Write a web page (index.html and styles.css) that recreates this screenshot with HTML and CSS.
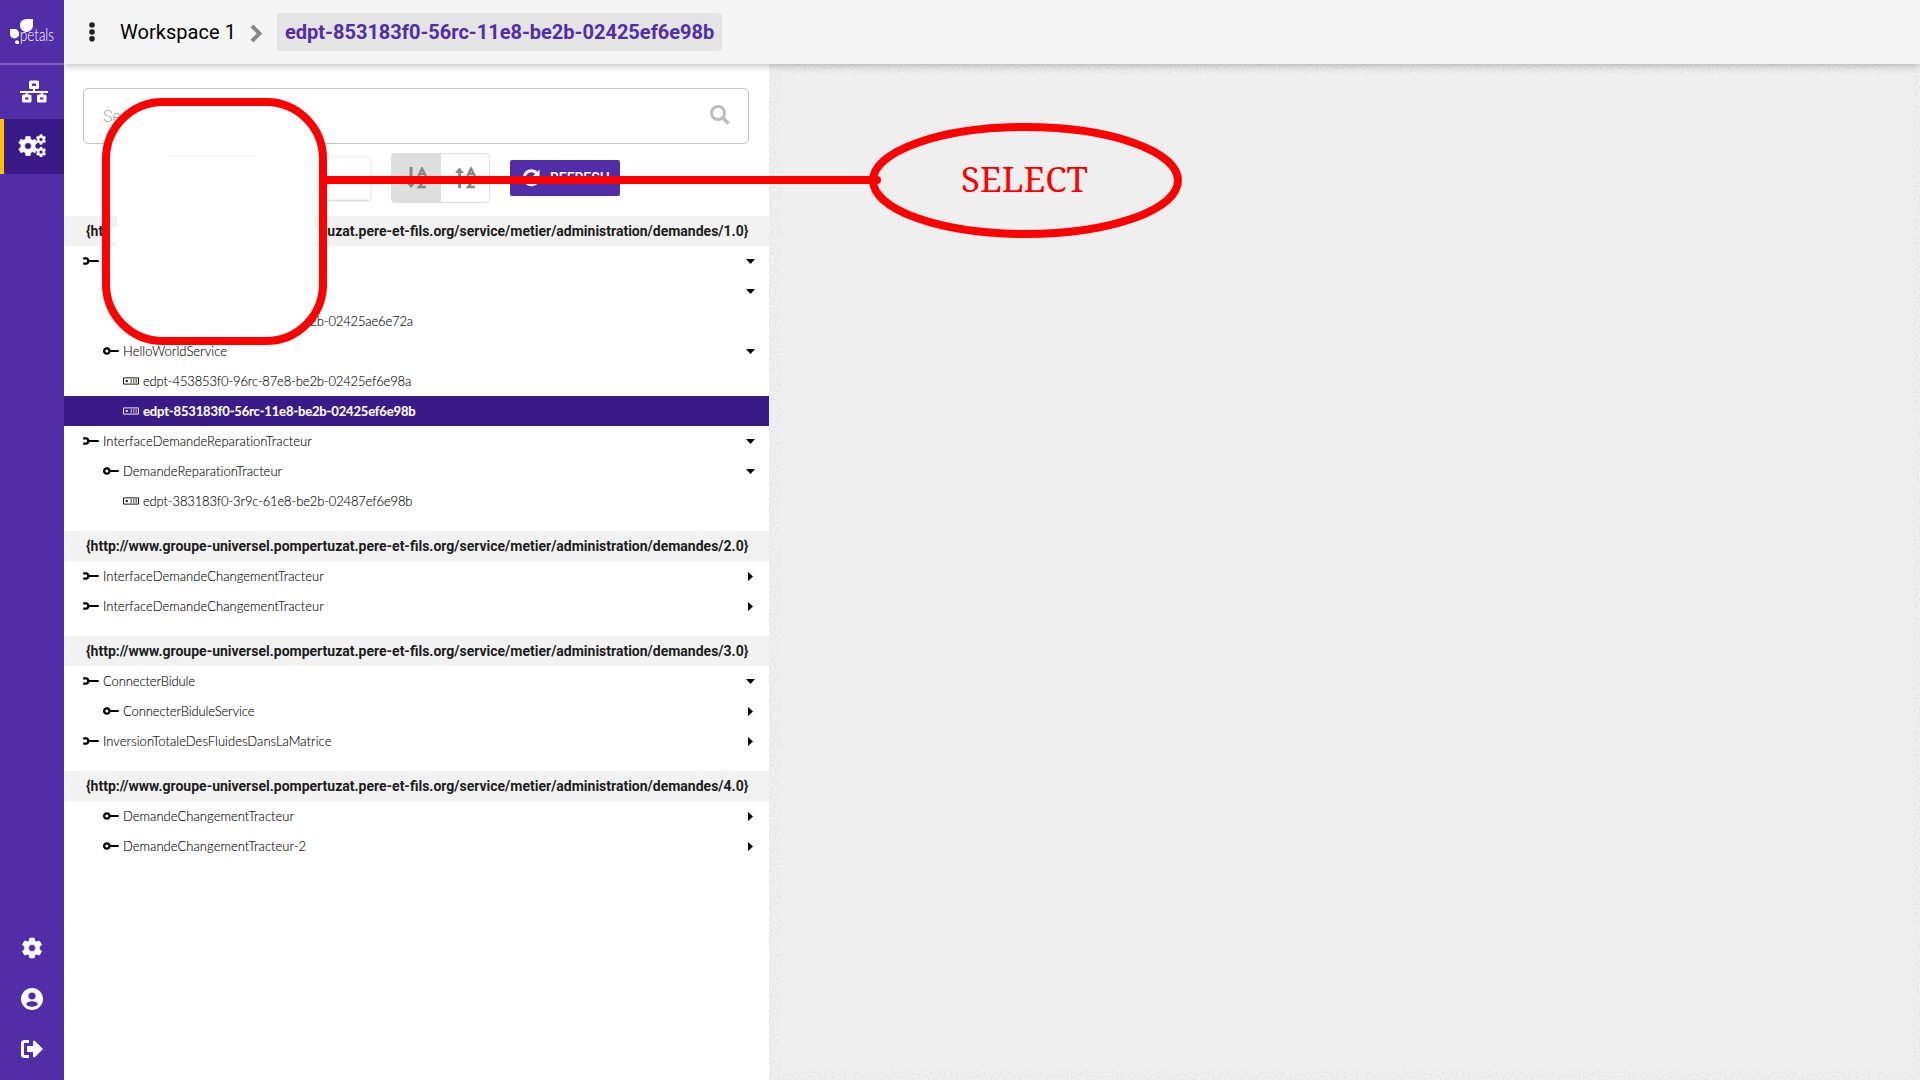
FILE: index.html
```html
<!DOCTYPE html>
<html lang="en">
<head>
<meta charset="utf-8">
<title>Petals Cockpit</title>
<link rel="stylesheet" href="styles.css">
</head>
<body>
<svg class="defs" aria-hidden="true">
  <symbol id="itf" viewBox="0 0 16 8"><path d="M.2 1.300H3.200Q5.300 1.800 5.300 4Q5.300 6.200 3.200 6.700H.2" fill="none" stroke="currentColor" stroke-width="2.200"/><path d="M6 4H15" stroke="currentColor" stroke-width="2" stroke-linecap="round"/></symbol>
  <symbol id="svc" viewBox="0 0 16 8"><circle cx="3.800" cy="4" r="2.700" fill="none" stroke="currentColor" stroke-width="2.200"/><path d="M7 4H15" stroke="currentColor" stroke-width="2" stroke-linecap="round"/></symbol>
  <symbol id="edp" viewBox="0 0 16 8"><path d="M.5 .9H15.5V7.1H.5Z" fill="none" stroke="currentColor" stroke-width=".9"/><path d="M2.5 4H5M3.7 3V5M7.5 3H9M10 3H11.500M12.500 3H14M7.500 5H9M10 5H11.500M12.500 5H14" stroke="currentColor" stroke-width="1.200"/></symbol>
  <symbol id="cog" viewBox="0 0 24 24"><path fill-rule="evenodd" d="M9.500 1h5l.6 3.200 1.900 1.100 3.100-1.100 2.500 4.300-2.500 2.100v2.800l2.500 2.100-2.500 4.300-3.100-1.100-1.900 1.100-.6 3.200h-5l-.6-3.200L7 18.700l-3.100 1.100-2.500-4.300 2.500-2.100v-2.800L1.400 8.500l2.500-4.300L7 5.300l1.900-1.100zM12 8.200a3.800 3.800 0 1 0 0 7.600a3.800 3.800 0 0 0 0-7.600z" fill="currentColor" stroke="currentColor" stroke-width=".6" stroke-linejoin="round"/></symbol>
</svg>
<div class="app">
  <nav class="rail">
    <div class="logo">
      <svg width="64" height="62" viewBox="0 0 64 62"><path d="M33 19V25.500A6.500 6.500 0 0 1 20 25.500Q20 19 27 19ZM10 29H14.500A4.700 4.700 0 0 1 14.500 38.400A4.700 4.700 0 0 1 10 34ZM17 40.300Q19.500 41 19 43.500Q15 45 15 42Q15 40.500 17 40.300Z" fill="#fff"/><text x="20" y="41" textLength="34" lengthAdjust="spacingAndGlyphs" class="logo-text">petals</text></svg>
    </div>
    <div class="nav-item">
      <svg width="28" height="24" viewBox="0 0 28 24" fill="none" stroke="#fff"><path d="M10.500 2H17.500V7.500H10.500ZM3.500 16H10V21H3.500ZM18.500 16H25V21H18.500Z" stroke-width="3" stroke-linejoin="round"/><path d="M0 12H28M14 8V12M6.700 12V15M21.700 12V15" stroke-width="2"/></svg>
    </div>
    <div class="nav-item active">
      <svg width="28" height="24" viewBox="0 0 28 24" color="#fff"><use href="#cog" x="-.5" y="1.500" width="21" height="21"/><use href="#cog" x="17.500" y="0" width="11" height="11"/><use href="#cog" x="17.500" y="12.500" width="11" height="11"/></svg>
    </div>
    <div class="rail-bottom">
      <svg width="22" height="22" viewBox="0 0 24 24" color="#fff"><use href="#cog" width="24" height="24"/></svg>
      <svg width="22" height="22" viewBox="0 0 22 22"><circle cx="11" cy="11" r="11" fill="#fff"/><circle cx="11" cy="8" r="3.600" fill="#512da8"/><ellipse cx="11" cy="16" rx="5.700" ry="2.800" fill="#512da8"/></svg>
      <svg class="exit" width="22" height="18" viewBox="0 0 22 18"><path d="M8 1.600H3.500Q1.500 1.600 1.500 3.600V14.400Q1.500 16.400 3.500 16.400H8" fill="none" stroke="#fff" stroke-width="3"/><path d="M6 6H12V1L13.500 .5L22 9L13.500 17.500L12 17V12H6Z" fill="#fff"/></svg>
    </div>
  </nav>
  <div class="main">
    <header class="topbar">
      <svg class="dots" width="6" height="20" viewBox="0 0 6 20"><circle cx="3" cy="3" r="2.800"/><circle cx="3" cy="10" r="2.800"/><circle cx="3" cy="16.800" r="2.800"/></svg>
      <span class="workspace">Workspace 1</span>
      <svg class="chevron" width="12" height="20" viewBox="0 0 12 20"><path d="M2 2L9.500 9.500L2 17" fill="none" stroke="#888" stroke-width="4"/></svg>
      <span class="crumb">edpt-853183f0-56rc-11e8-be2b-02425ef6e98b</span>
    </header>
    <div class="content">
      <section class="panel">
        <div class="search"><span>Search...</span>
          <svg width="20" height="20" viewBox="0 0 20 20" fill="none" stroke="#bdbdbd"><circle cx="8" cy="8" r="6.500" stroke-width="3"/><path d="M12.500 12.500L18.500 18.500" stroke-width="3.500"/></svg>
        </div>
        <div class="tools">
          <div class="select"></div>
          <div class="toggle">
            <div class="half on"><svg width="21" height="22" viewBox="0 0 21 22"><path d="M4 0V17" stroke="#888" stroke-width="3"/><path d="M-.5 16H8.500L4 21Z" fill="#888"/><path d="M11.500 9L15 1.500L18.800 9M12.500 7H18M11.500 13H18L12 20H19" fill="none" stroke="#888" stroke-width="2.400"/></svg></div>
            <div class="half"><svg width="21" height="22" viewBox="0 0 21 22"><path d="M4.500 4V21" stroke="#888" stroke-width="3"/><path d="M0 6H9L4.500 .5Z" fill="#888"/><path d="M12.500 9L16 1.500L19.800 9M13.500 7H19M12.500 13H19L13 20H20" fill="none" stroke="#888" stroke-width="2.400"/></svg></div>
          </div>
          <div class="refresh"><svg width="18" height="18" viewBox="0 0 18 18"><path d="M15 4.500A7 7 0 1 0 15.500 12" fill="none" stroke="#fff" stroke-width="3"/><path d="M17.500 .5V8H10Z" fill="#fff"/></svg><span>REFRESH</span></div>
        </div>
        <div class="tree">
          <div class="group">
            <div class="ns">{http://www.groupe-universel.pompertuzat.pere-et-fils.org/service/metier/administration/demandes/1.0}</div>
            <div class="row l1"><svg><use href="#itf"/></svg><span></span><i class="down"></i></div>
            <div class="row l2"><span></span><i class="down"></i></div>
            <div class="row l3"><svg><use href="#edp"/></svg><span>edpt-783153f0-96rc-87e8-be2b-02425ae6e72a</span></div>
            <div class="row l2"><svg><use href="#svc"/></svg><span>HelloWorldService</span><i class="down"></i></div>
            <div class="row l3"><svg><use href="#edp"/></svg><span>edpt-453853f0-96rc-87e8-be2b-02425ef6e98a</span></div>
            <div class="row l3 selected"><svg><use href="#edp"/></svg><span>edpt-853183f0-56rc-11e8-be2b-02425ef6e98b</span></div>
            <div class="row l1"><svg><use href="#itf"/></svg><span>InterfaceDemandeReparationTracteur</span><i class="down"></i></div>
            <div class="row l2"><svg><use href="#svc"/></svg><span>DemandeReparationTracteur</span><i class="down"></i></div>
            <div class="row l3"><svg><use href="#edp"/></svg><span>edpt-383183f0-3r9c-61e8-be2b-02487ef6e98b</span></div>
          </div>
          <div class="group">
            <div class="ns">{http://www.groupe-universel.pompertuzat.pere-et-fils.org/service/metier/administration/demandes/2.0}</div>
            <div class="row l1"><svg><use href="#itf"/></svg><span>InterfaceDemandeChangementTracteur</span><i class="right"></i></div>
            <div class="row l1"><svg><use href="#itf"/></svg><span>InterfaceDemandeChangementTracteur</span><i class="right"></i></div>
          </div>
          <div class="group">
            <div class="ns">{http://www.groupe-universel.pompertuzat.pere-et-fils.org/service/metier/administration/demandes/3.0}</div>
            <div class="row l1"><svg><use href="#itf"/></svg><span class="tight">ConnecterBidule</span><i class="down"></i></div>
            <div class="row l2"><svg><use href="#svc"/></svg><span class="tight">ConnecterBiduleService</span><i class="right"></i></div>
            <div class="row l1"><svg><use href="#itf"/></svg><span>InversionTotaleDesFluidesDansLaMatrice</span><i class="right"></i></div>
          </div>
          <div class="group">
            <div class="ns">{http://www.groupe-universel.pompertuzat.pere-et-fils.org/service/metier/administration/demandes/4.0}</div>
            <div class="row l2"><svg><use href="#svc"/></svg><span>DemandeChangementTracteur</span><i class="right"></i></div>
            <div class="row l2"><svg><use href="#svc"/></svg><span>DemandeChangementTracteur-2</span><i class="right"></i></div>
          </div>
        </div>
      </section>
      <section class="canvas">
        <svg width="1151" height="1016" viewBox="0 0 1151 1016">
          <filter id="grain" x="0" y="0" width="1" height="1" color-interpolation-filters="sRGB"><feTurbulence type="fractalNoise" baseFrequency=".5" numOctaves="2"/><feColorMatrix values=".12 0 0 0 .87 .12 0 0 0 .87 .12 0 0 0 .87 0 0 0 0 1"/></filter>
          <rect width="12" height="1016" filter="url(#grain)"/>
          <rect x="12" y="1006" width="1139" height="10" filter="url(#grain)"/>
          <rect x="1144" width="7" height="1006" filter="url(#grain)"/>
          <rect x="12" width="1132" height="10" filter="url(#grain)"/>
        </svg>
      </section>
    </div>
  </div>
</div>
<svg class="annotation" width="1920" height="1080" viewBox="0 0 1920 1080">
  <rect x="106" y="102" width="217" height="239" rx="57" fill="#fff"/>
  <path d="M110 216H117V227H110ZM110 242H117V246H110ZM314 216H320V227H314ZM314 242H320V246H314Z" fill="#f2f2f2"/>
  <path d="M168 156H256" stroke="#f5f5f5"/>
  <rect x="106" y="102" width="217" height="239" rx="57" fill="none" stroke="red" stroke-width="8"/>
  <path d="M323 180H877" stroke="red" stroke-width="8" stroke-linecap="round"/>
  <ellipse cx="1025.500" cy="180.500" rx="152.500" ry="53.500" fill="none" stroke="red" stroke-width="8"/>
  <text x="961" y="192" textLength="127" lengthAdjust="spacingAndGlyphs" class="label">SELECT</text>
</svg>
</body>
</html>
```
FILE: styles.css
```css
* { box-sizing: border-box; }
body { margin: 0; font-family: Roboto, sans-serif; color: #1c1c1c; overflow: hidden; }
.defs { position: absolute; width: 0; height: 0; }
.app { display: flex; height: 1080px; background: #fff; }
.rail { width: 64px; background: #512da8; display: flex; flex-direction: column; flex: none; }
.logo { height: 65px; border-bottom: 2px solid #7d5fc0; }
.logo-text { font: 300 17px Lato, sans-serif; fill: #fff; }
.nav-item { height: 54px; padding-left: 4px; display: flex; align-items: center; justify-content: center; }
.nav-item.active { height: 55px; background: #3a1a87; border-left: 4px solid #ffc107; padding: 0 4px 1px 0; }
.rail-bottom { margin-top: auto; display: flex; flex-direction: column; align-items: center; gap: 29px; padding-bottom: 22px; }
.exit { margin-top: 1px; }
.main { flex: 1; display: flex; flex-direction: column; min-width: 0; }
.topbar { height: 64px; flex: none; background: #f5f5f5; display: flex; align-items: center; padding: 0 0 1px 25px; box-shadow: 0 1px 8px rgba(0,0,0,.3); z-index: 1; clip-path: inset(0 0 -12px 0); }
.dots { fill: #212121; }
.workspace { font-size: 20px; color: #000; margin-left: 25px; width: 115px; letter-spacing: .05px; white-space: nowrap; }
.chevron { margin: 4px 0 0 15px; }
.crumb { margin-left: 15px; height: 38px; line-height: 39px; padding: 0 8px; background: #e4e4e4; border-radius: 4px; color: #512da8; font-size: 20px; font-weight: 700; width: 445px; white-space: nowrap; }
.content { flex: 1; display: flex; min-height: 0; }
.panel { width: 705px; flex: none; padding-top: 24px; background: #fff; }
.search { margin: 0 20px 0 19px; height: 56px; border: 1px solid #c4c4c4; border-radius: 5px; display: flex; align-items: center; justify-content: space-between; padding: 0 18px 0 19px; color: #aaa; font: 300 16px Roboto, sans-serif; }
.search svg { margin-bottom: 3px; }
.tools { height: 72px; display: flex; align-items: center; padding: 0 0 4px 101px; }
.select { width: 206px; height: 44px; border-radius: 4px; border: 1px solid #f2f2f2; box-shadow: 0 1px 2px rgba(0,0,0,.18); }
.toggle { display: flex; width: 99px; height: 50px; margin-left: 20px; border: 1px solid #dedede; border-radius: 4px; overflow: hidden; }
.half { flex: 1; display: flex; align-items: center; justify-content: center; padding-left: 2px; }
.half.on { background: #dedede; }
.refresh { margin-left: 20px; width: 110px; height: 36px; background: #512da8; color: #fff; border-radius: 2px; display: flex; align-items: center; gap: 10px; padding-left: 12px; font-size: 14px; font-weight: 500; }
.group { margin-bottom: 15px; }
.ns { height: 30px; line-height: 30px; background: #f2f2f2; padding-left: 22px; font-size: 14px; font-weight: 700; white-space: nowrap; }
.row { height: 30px; display: flex; align-items: center; padding-right: 14px; font: 300 13px Lato, sans-serif; letter-spacing: .03px; white-space: nowrap; color: #000; }
.row span { -webkit-text-stroke: .1px currentColor; }
.row .tight { letter-spacing: -.12px; }
.row svg { width: 16px; height: 8px; margin-right: 4px; flex: none; }
.row i { margin: 1px 0 0 auto; width: 9px; height: 5px; background: #000; clip-path: polygon(0 0, 100% 0, 50% 100%); }
.row i.right { width: 5px; height: 9px; clip-path: polygon(0 0, 100% 50%, 0 100%); margin-right: 2px; }
.l1 { padding-left: 19px; }
.l2 { padding-left: 39px; }
.l3 { padding-left: 59px; letter-spacing: -.16px; }
.selected { background: #3a1a87; color: #fff; font-weight: 700; }
.canvas { flex: 1; background: #efefef; }
.canvas svg { display: block; }
.annotation { position: absolute; left: 0; top: 0; }
.label { font: 34px "Noto Serif", "Liberation Serif", serif; fill: red; }
```
